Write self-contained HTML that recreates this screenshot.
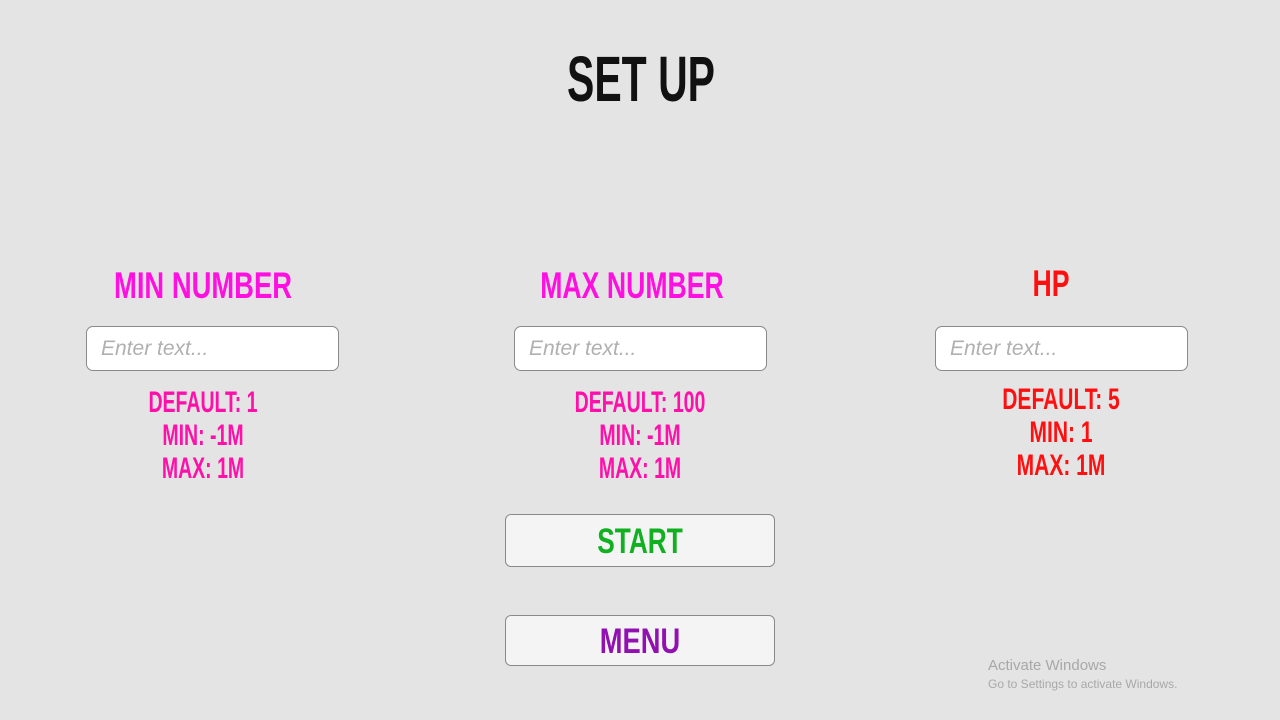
<!DOCTYPE html>
<html><head><style>
body{margin:0;width:1280px;height:720px;background:#e4e4e4;position:relative;overflow:hidden;font-family:"Liberation Sans",sans-serif}
.t{position:absolute;font-weight:bold;text-align:center;white-space:nowrap;line-height:1}
.in{position:absolute;width:253px;height:45px;background:#fff;border:1px solid #8a8a8a;border-radius:7px;box-sizing:border-box;font-family:"Liberation Sans",sans-serif;font-style:italic;color:#b0b0b0;font-size:21px;line-height:43px;padding-left:14px}
.btn{position:absolute;left:505px;width:270px;background:#f4f4f4;border:1px solid #8a8a8a;border-radius:6px;box-sizing:border-box}
.d{font-size:30px;line-height:33px}
</style></head><body>
<div class="t" style="left:641px;top:47px;font-size:64px;color:#111;transform:translateX(-50%) scaleX(0.64)">SET UP</div>
<div class="t" style="left:203px;top:267px;font-size:37px;color:#ff10e0;transform:translateX(-50%) scaleX(0.74)">MIN NUMBER</div>
<div class="t" style="left:632px;top:267px;font-size:37px;color:#ff10e0;transform:translateX(-50%) scaleX(0.72)">MAX NUMBER</div>
<div class="t" style="left:1051px;top:265px;font-size:37px;color:#ff1010;transform:translateX(-50%) scaleX(0.72)">HP</div>
<div class="in" style="left:86px;top:326px">Enter text...</div>
<div class="in" style="left:514px;top:326px">Enter text...</div>
<div class="in" style="left:935px;top:326px">Enter text...</div>
<div class="t d" style="left:203px;top:386px;color:#ff10a8;transform:translateX(-50%) scaleX(0.65)">DEFAULT: 1<br>MIN: -1M<br>MAX: 1M</div>
<div class="t d" style="left:640px;top:386px;color:#ff10a8;transform:translateX(-50%) scaleX(0.65)">DEFAULT: 100<br>MIN: -1M<br>MAX: 1M</div>
<div class="t d" style="left:1061px;top:383px;color:#ff1010;transform:translateX(-50%) scaleX(0.7)">DEFAULT: 5<br>MIN: 1<br>MAX: 1M</div>
<div class="btn" style="top:514px;height:53px"></div>
<div class="t" style="left:640px;top:524px;font-size:35px;color:#10b020;transform:translateX(-50%) scaleX(0.75)">START</div>
<div class="btn" style="top:615px;height:51px"></div>
<div class="t" style="left:640px;top:624px;font-size:35px;color:#9010b0;transform:translateX(-50%) scaleX(0.78)">MENU</div>
<div style="position:absolute;left:988px;top:657px;color:#a8a8a8;font-size:15px">Activate Windows</div>
<div style="position:absolute;left:988px;top:677px;color:#a8a8a8;font-size:12px">Go to Settings to activate Windows.</div>
</body></html>
